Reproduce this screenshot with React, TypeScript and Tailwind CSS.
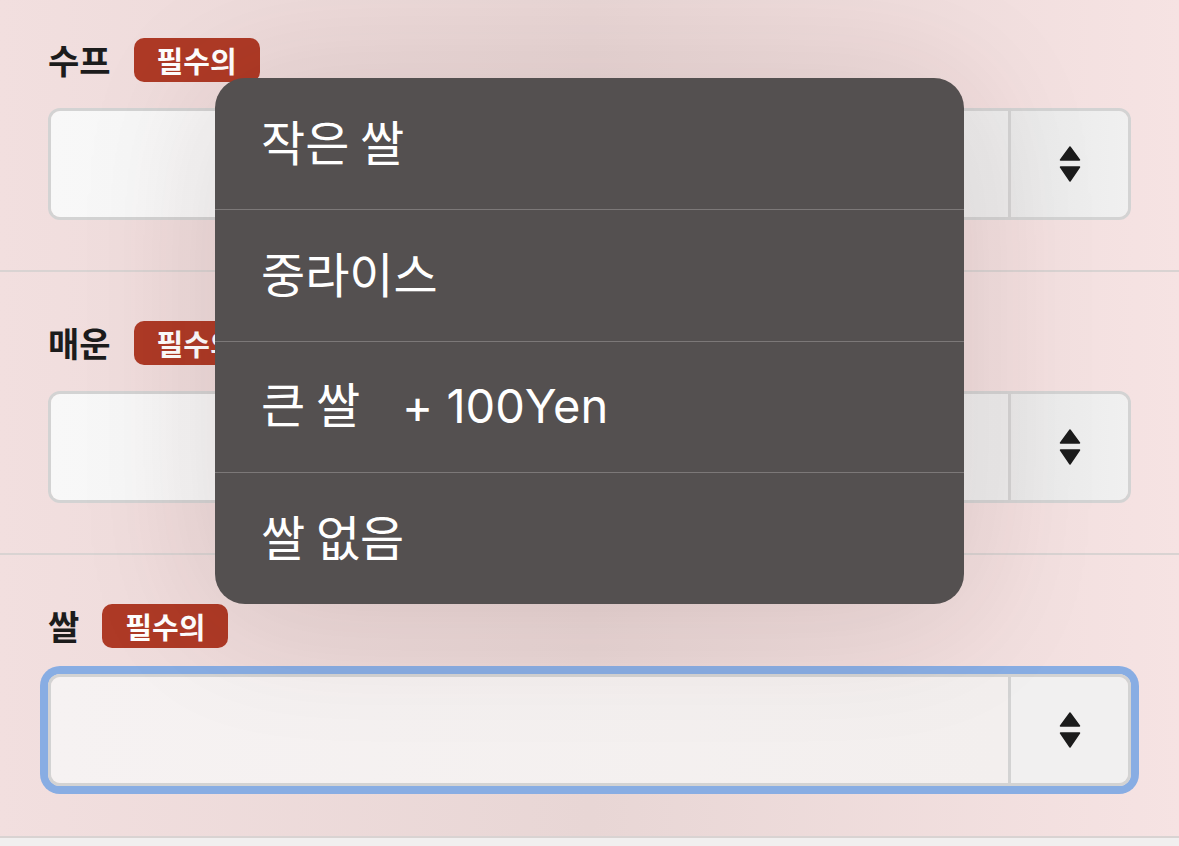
import React from "react";

const Arrows = () => (
  <svg width="24" height="40" viewBox="0 0 24 40">
    <path d="M12 3 L21.5 16 L2.5 16 Z" fill="#1c1c1c" stroke="#1c1c1c" strokeWidth="1.5" strokeLinejoin="round" />
    <path d="M2.5 23 L21.5 23 L12 37 Z" fill="#1c1c1c" stroke="#1c1c1c" strokeWidth="1.5" strokeLinejoin="round" />
  </svg>
);

const Select = ({ focused }: { focused?: boolean }) => (
  <div
    className={`flex h-[112px] rounded-[12px] border-[3px] border-[#d3d3d3] overflow-hidden ${
      focused ? "shadow-[0_0_0_8px_#88ade3]" : ""
    }`}
  >
    <div
      className={`flex-1 ${
        focused
          ? "bg-gradient-to-r from-[#f6f2f2] to-[#f3efee]"
          : "bg-gradient-to-r from-[#f8f8f8] to-[#ececec]"
      }`}
    />
    <div
      className={`w-[120px] border-l-[3px] border-[#d3d3d3] flex items-center justify-center ${
        focused ? "bg-[#f1f0f0]" : "bg-gradient-to-r from-[#e9e9e9] to-[#f0f0f0]"
      }`}
    >
      <Arrows />
    </div>
  </div>
);

const Section = ({ label, first, focused }: { label: string; first?: boolean; focused?: boolean }) => (
  <div className={`px-[48px] ${first ? "pt-[38px]" : "pt-[49px]"} pb-[50px] border-b-2 border-[#d9d3d2]`}>
    <div className="flex items-center h-[44px] gap-[23px]">
      <span className="text-[34px] font-bold text-[#1c1c1c] leading-none">{label}</span>
      <span className="h-[44px] px-[23px] rounded-[10px] bg-[#ae3a26] text-white text-[29px] font-bold flex items-center leading-none">
        필수의
      </span>
    </div>
    <div className="mt-[26px]">
      <Select focused={focused} />
    </div>
  </div>
);

export default function App() {
  return (
    <div
      className="relative w-[1179px] h-[846px] overflow-hidden bg-[#f4e2e2]"
      style={{ fontFamily: '"Noto Sans CJK KR", "Noto Sans", sans-serif' }}
    >
      <div className="absolute inset-0 bg-gradient-to-r from-[#f2dfdf] via-[#e8d6d5] to-[#f6e3e3]" />
      <div className="relative">
        <Section label="수프" first />
        <Section label="매운" />
        <Section label="쌀" focused />
        <div className="h-[20px] bg-[#f1efef]" />
      </div>
      <div className="absolute left-[215px] top-[78px] w-[749px] h-[526px] rounded-[30px] bg-[#545050] flex flex-col overflow-hidden shadow-[0_10px_140px_rgba(70,20,20,0.13)]">
        {["작은 쌀", "중라이스", "큰 쌀", "쌀 없음"].map((t, i) => (
          <div
            key={t}
            className={`flex-1 flex items-center pl-[46px] pb-[7px] text-white text-[48px] leading-none ${
              i > 0 ? "border-t border-[#7c7878]" : ""
            }`}
          >
            <span>
              {t}
              {i === 2 && (
                <span className="ml-[42px] font-['Inter',sans-serif] text-[47px]">+ 100Yen</span>
              )}
            </span>
          </div>
        ))}
      </div>
    </div>
  );
}
